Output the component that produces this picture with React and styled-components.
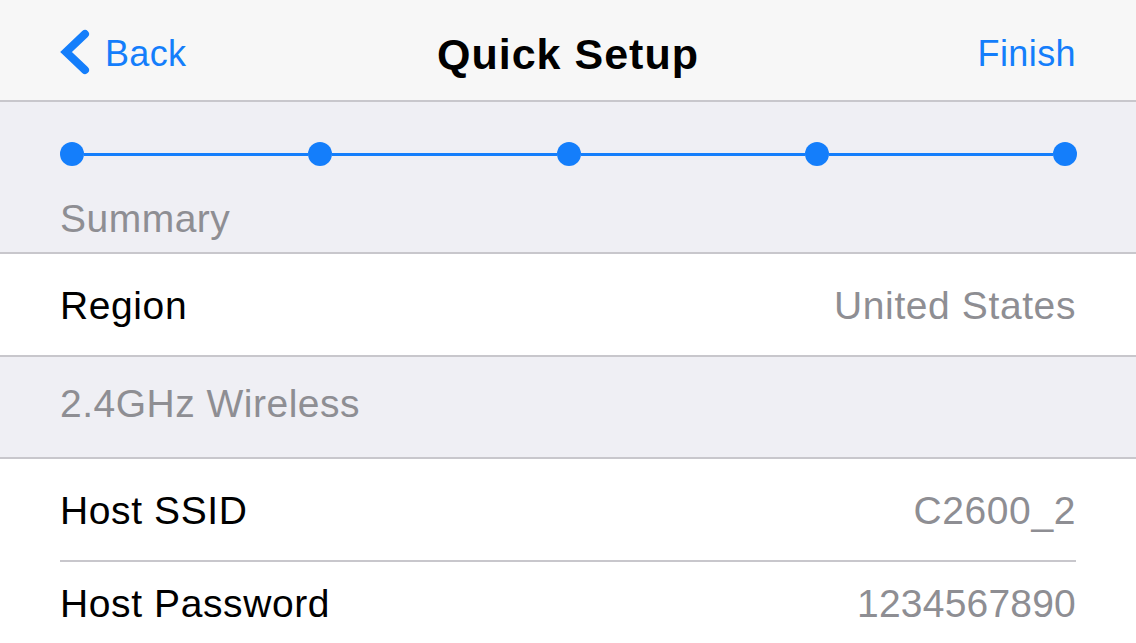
import React from 'react';
import styled, { createGlobalStyle } from 'styled-components';

const BLUE = '#147efb';
const GREY_TEXT = '#8e8e93';
const HAIRLINE = '#c8c7cc';

const GlobalStyle = createGlobalStyle`
	html, body {
		margin: 0;
		padding: 0;
		background: #ffffff;
	}
	body {
		font-family: "Liberation Sans", Arial, Helvetica, sans-serif;
		-webkit-font-smoothing: antialiased;
	}
`;

const Screen = styled.div`
	width: 1136px;
	height: 643px;
	overflow: hidden;
	background: #ffffff;
	display: flex;
	flex-direction: column;
`;

const NavBar = styled.header`
	height: 102px;
	flex-shrink: 0;
	box-sizing: border-box;
	padding: 8px 60px 0;
	background: #f7f7f7;
	border-bottom: 2px solid ${ HAIRLINE };
	display: grid;
	grid-template-columns: 1fr auto 1fr;
	align-items: center;
`;

const NavButton = styled.button`
	display: flex;
	align-items: center;
	gap: 15px;
	justify-self: ${ ( { align } ) => ( align === 'right' ? 'end' : 'start' ) };
	margin: 0;
	padding: 0;
	border: 0;
	background: none;
	color: ${ BLUE };
	font-family: inherit;
	font-size: 36px;
	letter-spacing: ${ ( { spacing } ) => spacing || '0.3px' };
	line-height: 36px;
	cursor: pointer;
`;

const Title = styled.h1`
	margin: 0;
	font-size: 43px;
	font-weight: 700;
	letter-spacing: 1px;
	line-height: 43px;
	color: #000000;
`;

const Section = styled.div`
	flex-shrink: 0;
	background: #efeff4;
	border-bottom: 2px solid ${ HAIRLINE };
	box-sizing: border-box;
	height: ${ ( { h } ) => h }px;
	padding: ${ ( { pad } ) => pad };
	display: flex;
	flex-direction: column;
	justify-content: ${ ( { justify } ) => justify || 'flex-start' };
`;

const Stepper = styled.div`
	display: flex;
	align-items: center;
	height: 24px;
`;

const StepDot = styled.span`
	width: 24px;
	height: 24px;
	border-radius: 50%;
	background: ${ BLUE };
	flex-shrink: 0;
`;

const StepLine = styled.span`
	flex: 1;
	height: 3px;
	background: ${ BLUE };
`;

const SectionLabel = styled.div`
	margin-top: ${ ( { mt } ) => mt || 0 }px;
	font-size: 39px;
	line-height: 39px;
	letter-spacing: 0.5px;
	color: ${ GREY_TEXT };
`;

const Row = styled.div`
	flex-shrink: 0;
	box-sizing: border-box;
	height: ${ ( { h } ) => h }px;
	padding: ${ ( { pt } ) => pt || 0 }px 60px 0;
	background: #ffffff;
	border-bottom: ${ ( { last } ) => ( last ? 'none' : `2px solid ${ HAIRLINE }` ) };
	display: flex;
	align-items: center;
	justify-content: space-between;
	font-size: 39px;
	line-height: 39px;
	letter-spacing: 0.6px;
`;

const RowLabel = styled.span`
	color: #000000;
`;

const RowValue = styled.span`
	color: ${ GREY_TEXT };
	letter-spacing: ${ ( { tight } ) => ( tight ? '0.2px' : '0.6px' ) };
`;

const Divider = styled.div`
	flex-shrink: 0;
	height: 2px;
	margin: 0 60px;
	background: ${ HAIRLINE };
`;

const Chevron = () => (
	<svg width="31" height="46" viewBox="0 0 31 46" style={ { marginLeft: -1, marginTop: -4 } }>
		<polyline
			points="26,5 7,23 26,41"
			fill="none"
			stroke={ BLUE }
			strokeWidth="8"
			strokeLinecap="round"
			strokeLinejoin="miter"
		/>
	</svg>
);

const steps = [ 1, 2, 3, 4, 5 ];

const rows = [
	{ label: 'Host SSID', value: 'C2600_2', h: 101, pt: 2 },
];

export default function App() {
	return (
		<>
			<GlobalStyle />
			<Screen>
				<NavBar>
					<NavButton>
						<Chevron />
						Back
					</NavButton>
					<Title>Quick Setup</Title>
					<NavButton align="right" spacing="0.4px">Finish</NavButton>
				</NavBar>

				<Section h={ 152 } pad="40px 59px 0 60px">
					<Stepper>
						{ steps.map( ( step, i ) => (
							<React.Fragment key={ step }>
								{ i > 0 && <StepLine /> }
								<StepDot />
							</React.Fragment>
						) ) }
					</Stepper>
					<SectionLabel mt={ 33 }>Summary</SectionLabel>
				</Section>

				<Row h={ 103 } pt={ 2 }>
					<RowLabel>Region</RowLabel>
					<RowValue>United States</RowValue>
				</Row>

				<Section h={ 102 } pad="0 60px 8px" justify="center">
					<SectionLabel>2.4GHz Wireless</SectionLabel>
				</Section>

				{ rows.map( ( row ) => (
					<Row key={ row.label } h={ row.h } pt={ row.pt } last>
						<RowLabel>{ row.label }</RowLabel>
						<RowValue>{ row.value }</RowValue>
					</Row>
				) ) }
				<Divider />
				<Row h={ 83 } last>
					<RowLabel>Host Password</RowLabel>
					<RowValue tight>1234567890</RowValue>
				</Row>
			</Screen>
		</>
	);
}
